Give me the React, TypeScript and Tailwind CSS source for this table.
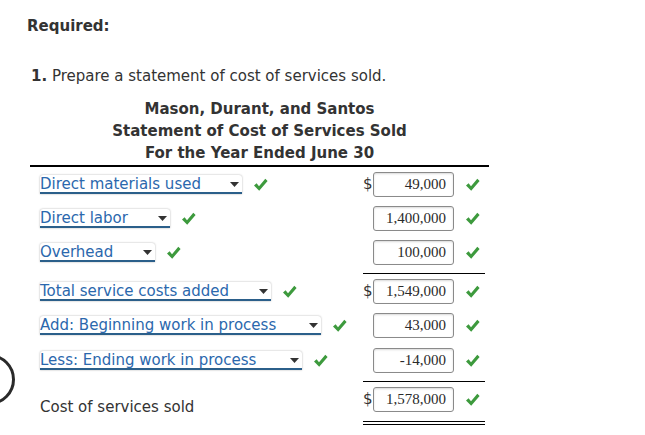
import React from "react";

const Check = ({ className = "" }: { className?: string }) => (
  <svg width="15" height="14" viewBox="0 0 15 14" className={className}>
    <path d="M1 7.5 L3.6 5.2 L6 8.2 L12.3 0.8 L14.6 2.9 L6.2 12.8 Z" fill="#3d9a3d" />
  </svg>
);

const Select = ({ label, w }: { label: string; w: number }) => (
  <div
    className="relative h-[19px] bg-white rounded-t-[3px] shadow-[0_0_2px_rgba(0,0,0,0.35)] border-b-2 border-[#2b5f8a] flex items-end"
    style={{ width: w }}
  >
    <span className="text-[15px] leading-[16px] text-[#2b68ad] whitespace-nowrap">{label}</span>
    <svg width="9" height="5" viewBox="0 0 9 5" className="absolute right-[3px] top-[7px]">
      <path d="M0 0 L9 0 L4.5 5 Z" fill="#333" />
    </svg>
  </div>
);

const Amount = ({ value, dollar }: { value: string; dollar?: boolean }) => (
  <div className="flex items-center w-[126px]">
    <span className="w-[10px] text-[15px] text-[#333] leading-none">{dollar ? "$" : ""}</span>
    <div
      className="w-[81px] h-[25px] border border-[#8a8a8a] rounded-[3px] bg-white shadow-[inset_0_1px_2px_rgba(0,0,0,0.15)] flex items-center justify-end pr-[7px] text-[15px] text-[#2a2a2a]"
      style={{ fontFamily: '"Liberation Serif", serif' }}
    >
      {value}
    </div>
    <Check className="ml-[11px]" />
  </div>
);

const Row = ({
  label,
  w,
  value,
  dollar,
  pb,
}: {
  label: string;
  w: number;
  value: string;
  dollar?: boolean;
  pb: number;
}) => (
  <div className="flex pt-[5px]" style={{ paddingBottom: pb }}>
    <div className="w-[333px] pl-[10px] flex items-center h-[25px]">
      <Select label={label} w={w} />
      <Check className="ml-[11px]" />
    </div>
    <Amount value={value} dollar={dollar} />
  </div>
);

export default function App() {
  return (
    <div
      className="relative w-[645px] h-[435px] bg-white overflow-hidden text-[#333]"
      style={{ fontFamily: '"DejaVu Sans", Verdana, sans-serif' }}
    >
      <div className="absolute left-[-36px] top-[354px] w-[51px] h-[51px] rounded-full border-[3px] border-[#2a2a2a]" />
      <div className="pl-[27px] pt-[16px] text-[15px] font-bold leading-[20px]">Required:</div>
      <div className="pl-[31px] pt-[30px] text-[15px] leading-[20px]">
        <span className="font-bold">1.</span> Prepare a statement of cost of services sold.
      </div>
      <div className="w-[459px] ml-[30px] mt-[12px]">
        <div className="text-center font-bold text-[15px] leading-[22px]">
          <div>Mason, Durant, and Santos</div>
          <div>Statement of Cost of Services Sold</div>
          <div>For the Year Ended June 30</div>
        </div>
        <div className="h-[2px] bg-black mt-[1px]" />
        <Row label="Direct materials used" w={202} value="49,000" dollar pb={4} />
        <Row label="Direct labor" w={130} value="1,400,000" pb={4} />
        <Row label="Overhead" w={115} value="100,000" pb={8} />
        <div className="ml-[333px] w-[122px] h-px bg-black" />
        <Row label="Total service costs added" w={231} value="1,549,000" dollar pb={4} />
        <Row label="Add: Beginning work in process" w={281} value="43,000" pb={5} />
        <Row label="Less: Ending work in process" w={262} value="-14,000" pb={8} />
        <div className="ml-[333px] w-[122px] h-px bg-black" />
        <div className="flex pt-[5px] pb-[9px]">
          <div className="w-[333px] pl-[10px] flex items-end h-[25px] text-[15px] leading-[18px] translate-y-[4px]">
            Cost of services sold
          </div>
          <Amount value="1,578,000" dollar />
        </div>
        <div className="ml-[333px] w-[122px] h-[4px] border-t border-b border-black" />
      </div>
    </div>
  );
}
